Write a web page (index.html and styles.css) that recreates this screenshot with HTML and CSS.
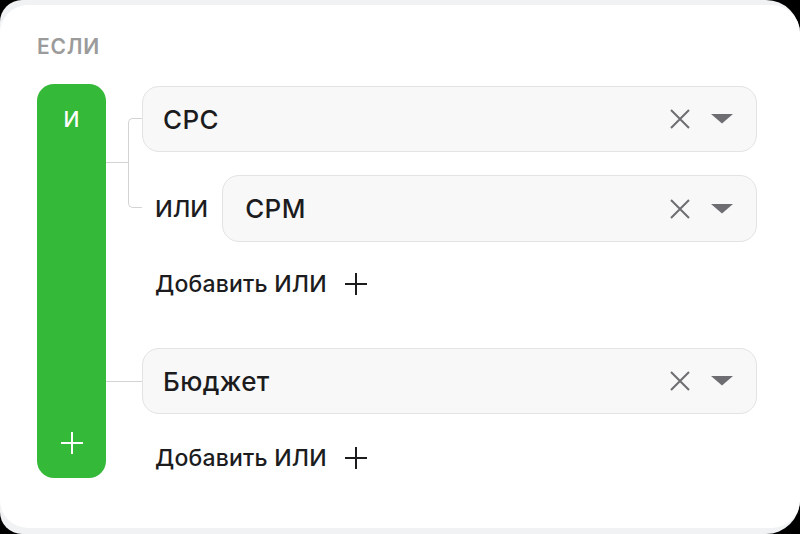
FILE: index.html
```html
<!DOCTYPE html>
<html lang="ru">
<head>
<meta charset="utf-8">
<title>Условие</title>
<link rel="stylesheet" href="styles.css">
</head>
<body>
<div class="screen">
  <div class="card">
    <div class="title">ЕСЛИ</div>
    <div class="rule">
      <div class="and-bar">
        <span class="and-label">И</span>
        <svg class="and-plus" width="24" height="24" viewBox="0 0 24 24"><path d="M12 1v22M1 12h22" stroke="#fff" stroke-width="2" fill="none"/></svg>
      </div>
      <div class="groups">
        <div class="group group-or">
          <span class="bracket"></span>
          <div class="field">
            <span class="field-text">CPC</span>
            <span class="field-icons">
              <svg width="20" height="20" viewBox="0 0 20 20"><path d="M1 1l18 18M19 1L1 19" stroke="#6d6d72" stroke-width="2" fill="none"/></svg>
              <svg width="22" height="10" viewBox="0 0 22 10"><path d="M0 0h22L11 9.5z" fill="#6d6d72"/></svg>
            </span>
          </div>
          <div class="or-row">
            <span class="or-label">ИЛИ</span>
            <div class="field">
              <span class="field-text">CPM</span>
              <span class="field-icons">
                <svg width="20" height="20" viewBox="0 0 20 20"><path d="M1 1l18 18M19 1L1 19" stroke="#6d6d72" stroke-width="2" fill="none"/></svg>
                <svg width="22" height="10" viewBox="0 0 22 10"><path d="M0 0h22L11 9.5z" fill="#6d6d72"/></svg>
              </span>
            </div>
          </div>
          <div class="add-or">
            <span>Добавить ИЛИ</span>
            <svg width="24" height="24" viewBox="0 0 24 24"><path d="M12 1v22M1 12h22" stroke="#1c1c1e" stroke-width="2" fill="none"/></svg>
          </div>
        </div>
        <div class="group group-single">
          <div class="field">
            <span class="field-text">Бюджет</span>
            <span class="field-icons">
              <svg width="20" height="20" viewBox="0 0 20 20"><path d="M1 1l18 18M19 1L1 19" stroke="#6d6d72" stroke-width="2" fill="none"/></svg>
              <svg width="22" height="10" viewBox="0 0 22 10"><path d="M0 0h22L11 9.5z" fill="#6d6d72"/></svg>
            </span>
          </div>
          <div class="add-or">
            <span>Добавить ИЛИ</span>
            <svg width="24" height="24" viewBox="0 0 24 24"><path d="M12 1v22M1 12h22" stroke="#1c1c1e" stroke-width="2" fill="none"/></svg>
          </div>
        </div>
      </div>
    </div>
  </div>
</div>
</body>
</html>
```

FILE: styles.css
```css
* { box-sizing: border-box; }

html, body {
  margin: 0;
  padding: 0;
  background: #000;
}

body {
  width: 800px;
  height: 534px;
  overflow: hidden;
  font-family: "Inter", "Noto Sans", sans-serif;
  color: #1c1c1e;
}

.screen {
  height: 534px;
  background: #f1f2f3;
  border-radius: 22px 34px 34px 22px;
  padding: 5px 0 6px;
  display: flex;
}

.card {
  flex: 1;
  background: #fff;
  border-radius: 28px;
  padding: 31px 43px 0 37px;
}

.title {
  font-size: 21px;
  line-height: 22px;
  font-weight: 600;
  color: #9b9b9b;
  letter-spacing: 0.8px;
}

.rule {
  display: flex;
  margin-top: 26px;
}

.and-bar {
  width: 69px;
  height: 394px;
  background: #35b939;
  border-radius: 17px;
  display: flex;
  flex-direction: column;
  align-items: center;
  justify-content: space-between;
  padding: 24px 0 23px;
}

.and-label {
  color: #fff;
  font-size: 21px;
  line-height: 24px;
  font-weight: 500;
}

.groups {
  flex: 1;
  margin-left: 36px;
  padding-top: 2px;
  display: flex;
  flex-direction: column;
  gap: 44px;
}

.group {
  position: relative;
  display: flex;
  flex-direction: column;
}

.group::before {
  content: "";
  position: absolute;
  left: -36px;
  height: 1px;
  background: #d3d3d3;
}

.group-or::before {
  top: 76px;
  width: 22px;
}

.group-single::before {
  top: 33px;
  width: 36px;
}

.bracket {
  position: absolute;
  left: -14px;
  top: 32px;
  width: 14px;
  height: 90px;
  border: 1px solid #d3d3d3;
  border-right: none;
  border-radius: 5px 0 0 5px;
}

.field {
  flex: none;
  height: 66px;
  background: #f8f8f8;
  border: 1px solid #e3e3e3;
  border-radius: 17px;
  display: flex;
  align-items: center;
  justify-content: space-between;
  padding: 0 23px 0 20px;
}

.field-text {
  font-size: 26px;
  font-weight: 500;
  letter-spacing: 0.4px;
  color: #1c1c1e;
}

.field-icons {
  display: flex;
  align-items: center;
  gap: 21px;
}

.or-row {
  display: flex;
  align-items: center;
  margin-top: 23px;
  gap: 14px;
}

.or-row .field {
  flex: 1;
  height: 67px;
  padding-left: 22px;
}

.or-label {
  margin-left: 13px;
  font-size: 23.5px;
  font-weight: 500;
}

.add-or {
  display: flex;
  align-items: center;
  height: 40px;
  margin-top: 22px;
  margin-left: 13px;
  gap: 17px;
  font-size: 23px;
  font-weight: 500;
  letter-spacing: 0.2px;
}

.group-single .add-or {
  margin-top: 24px;
}
```
